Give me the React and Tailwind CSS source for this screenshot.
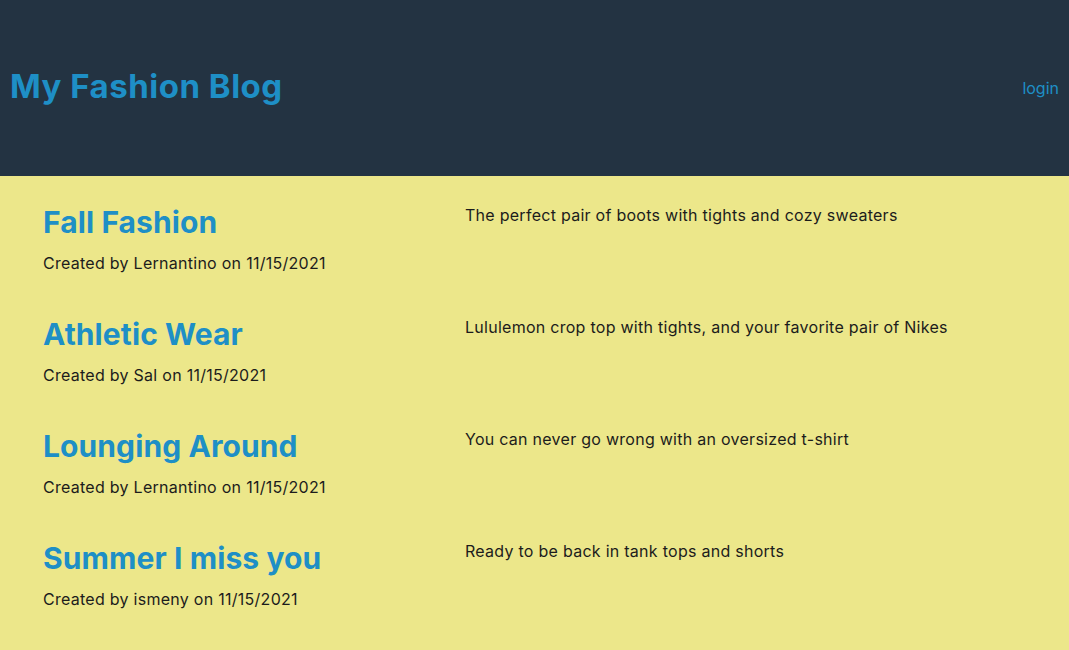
import React from "react";

const posts = [
  {
    title: "Fall Fashion",
    author: "Lernantino",
    date: "11/15/2021",
    body: "The perfect pair of boots with tights and cozy sweaters",
  },
  {
    title: "Athletic Wear",
    author: "Sal",
    date: "11/15/2021",
    body: "Lululemon crop top with tights, and your favorite pair of Nikes",
  },
  {
    title: "Lounging Around",
    author: "Lernantino",
    date: "11/15/2021",
    body: "You can never go wrong with an oversized t-shirt",
  },
  {
    title: "Summer I miss you",
    author: "ismeny",
    date: "11/15/2021",
    body: "Ready to be back in tank tops and shorts",
  },
];

export default function App() {
  return (
    <div className="min-h-screen bg-[#ece78a] font-['Inter',sans-serif] text-[#1c1c1c]">
      <header className="flex h-[176px] items-center justify-between bg-[#233342] px-[10px]">
        <h1 className="mb-[3px] text-[33px] font-bold tracking-[0.5px] text-[#1e8fc6]">My Fashion Blog</h1>
        <a href="#" className="text-base text-[#1e8fc6]">
          login
        </a>
      </header>

      <main className="pt-[28px]">
        {posts.map((post) => (
          <div key={post.title} className="mb-[41px] flex pl-[43px]">
            <div className="w-[422px]">
              <h2 className="text-[30px] font-bold leading-[36px] tracking-[0.1px] text-[#1e8fc6]">
                {post.title}
              </h2>
              <p className="mt-[11px] text-base leading-6 tracking-[0.27px]">
                Created by {post.author} on {post.date}
              </p>
            </div>
            <p className="-mt-px text-base leading-6 tracking-[0.27px]">{post.body}</p>
          </div>
        ))}
      </main>
    </div>
  );
}
